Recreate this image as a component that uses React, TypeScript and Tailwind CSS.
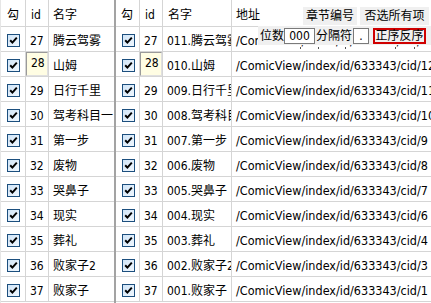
import React from "react";

const left = [
  [27, "腾云驾雾"],
  [28, "山姆"],
  [29, "日行千里"],
  [30, "驾考科目一"],
  [31, "第一步"],
  [32, "废物"],
  [33, "哭鼻子"],
  [34, "现实"],
  [35, "葬礼"],
  [36, "败家子2"],
  [37, "败家子"],
] as const;

const right = [
  [27, "011.腾云驾雾", "13"],
  [28, "010.山姆", "12"],
  [29, "009.日行千里", "11"],
  [30, "008.驾考科目一", "10"],
  [31, "007.第一步", "9"],
  [32, "006.废物", "8"],
  [33, "005.哭鼻子", "7"],
  [34, "004.现实", "6"],
  [35, "003.葬礼", "4"],
  [36, "002.败家子2", "3"],
  [37, "001.败家子", "1"],
] as const;

const font = {
  fontFamily:
    '"DejaVu Sans Condensed", "Liberation Sans", "Noto Sans CJK SC", sans-serif',
};

function Check() {
  return (
    <svg width="13" height="13" viewBox="0 0 13 13" className="block">
      <defs>
        <linearGradient id="cbg" x1="0" y1="0" x2="1" y2="1">
          <stop offset="0" stopColor="#cfe4f7" />
          <stop offset="1" stopColor="#f2f8fe" />
        </linearGradient>
      </defs>
      <rect x="0.5" y="0.5" width="12" height="12" fill="url(#cbg)" stroke="#1c4f7e" />
      <path d="M3.2 6.2 L5.4 8.6 L9.8 3.6" fill="none" stroke="#000" strokeWidth="2" />
    </svg>
  );
}

function IdCell({ id, w, pl }: { id: number; w: string; pl: string }) {
  if (id === 28) {
    return (
      <div className={`${w} shrink-0 h-full border-r border-[#d5d5d5] relative`}>
        <div className="absolute inset-0 bg-[#fffde3] border border-[#9a9a9a] border-r-[#e0e0e0] border-b-[#e0e0e0]">
          <div className={`${pl} pt-[3px] text-[12px] leading-[14px]`}>{id}</div>
        </div>
      </div>
    );
  }
  return (
    <div className={`${w} shrink-0 h-full border-r border-[#d5d5d5] ${pl} pt-[7px] text-[12px] leading-[14px]`}>
      {id}
    </div>
  );
}

export default function App() {
  return (
    <div
      className="w-[431px] h-[303px] relative overflow-hidden bg-white text-black"
      style={font}
    >
      <div className="flex h-full">
        {/* left grid */}
        <div className="w-[114px] shrink-0 flex flex-col border-l border-[#e6e6e6]">
          <div className="h-[27px] shrink-0 flex border-b border-[#d5d5d5]">
            <div className="w-[25px] shrink-0 border-r border-[#d5d5d5] pl-[6px] pt-[8px] text-[12px] leading-[14px]">勾</div>
            <div className="w-[23px] shrink-0 border-r border-[#d5d5d5] pl-[5px] pt-[8px] text-[12px] leading-[14px]">id</div>
            <div className="flex-1 pl-[4px] pt-[8px] text-[12px] leading-[14px]">名字</div>
          </div>
          {left.map(([id, name]) => (
            <div key={id} className="h-[25px] shrink-0 flex border-b border-[#d5d5d5]">
              <div className="w-[25px] shrink-0 border-r border-[#d5d5d5] pl-[6px] pt-[7px]">
                <Check />
              </div>
              <IdCell id={id} w="w-[23px]" pl="pl-[4px]" />
              <div className="flex-1 min-w-0 overflow-hidden whitespace-nowrap pl-[4px] pt-[7px] text-[12px] leading-[14px]">
                {name}
              </div>
            </div>
          ))}
        </div>
        {/* divider */}
        <div className="w-[2px] shrink-0 bg-[#a3a3a3]" />
        {/* right grid */}
        <div className="flex-1 min-w-0 flex flex-col">
          <div className="h-[27px] shrink-0 flex border-b border-[#d5d5d5]">
            <div className="w-[24px] shrink-0 border-r border-[#d5d5d5] pl-[5px] pt-[8px] text-[12px] leading-[14px]">勾</div>
            <div className="w-[23px] shrink-0 border-r border-[#d5d5d5] pl-[5px] pt-[8px] text-[12px] leading-[14px]">id</div>
            <div className="w-[69px] shrink-0 border-r border-[#d5d5d5] pl-[5px] pt-[8px] text-[12px] leading-[14px]">名字</div>
            <div className="flex-1 pl-[4px] pt-[8px] text-[12px] leading-[14px]">地址</div>
          </div>
          {right.map(([id, name, cid]) => (
            <div key={id} className="h-[25px] shrink-0 flex border-b border-[#d5d5d5]">
              <div className="w-[24px] shrink-0 border-r border-[#d5d5d5] pl-[6px] pt-[7px]">
                <Check />
              </div>
              <IdCell id={id} w="w-[23px]" pl="pl-[4px]" />
              <div className="w-[69px] shrink-0 border-r border-[#d5d5d5] overflow-hidden whitespace-nowrap pl-[4px] pt-[7px] text-[12px] leading-[14px]">
                {name}
              </div>
              <div className="flex-1 min-w-0 overflow-hidden whitespace-nowrap pl-[4px] pt-[7px] text-[12.5px] leading-[14px]">
                /ComicView/index/id/633343/cid/{cid}
              </div>
            </div>
          ))}
        </div>
      </div>

      {/* overlay controls */}
      <div className="absolute left-[303px] top-[7px] flex gap-[3px] text-[12px] leading-[14px]">
        <div className="w-[54px] h-[18px] bg-[#f0f0f0] flex items-center justify-center">章节编号</div>
        <div className="w-[69px] h-[18px] bg-[#f0f0f0] flex items-center justify-center">否选所有项</div>
      </div>
      <div className="absolute left-[258px] top-[26px] w-[173px] h-[19px] bg-[#f0f0f0] flex items-center text-[12px] leading-[14px]">
        <span className="pl-[2px]">位数</span>
        <div className="ml-[0px] w-[31px] h-[16px] bg-white border border-[#7a7a7a] flex items-center justify-center">000</div>
        <span className="ml-[1px]">分隔符</span>
        <div className="ml-[1px] w-[16px] h-[16px] bg-white border border-[#7a7a7a] flex items-center justify-center">.</div>
        <div className="ml-[4px] w-[53px] h-[16px] border-2 border-[#d00000] bg-[#f0f0f0] flex items-center justify-center">正序反序</div>
      </div>
      <span className="absolute left-[300px] top-[47px] w-px h-[2px] bg-[#555]" />
      <span className="absolute left-[318px] top-[47px] w-px h-[2px] bg-[#555]" />
      <span className="absolute left-[345px] top-[47px] w-px h-[2px] bg-[#555]" />
      <span className="absolute left-[395px] top-[47px] w-px h-[2px] bg-[#555]" />
      <span className="absolute left-[414px] top-[47px] w-px h-[2px] bg-[#555]" />
    </div>
  );
}
